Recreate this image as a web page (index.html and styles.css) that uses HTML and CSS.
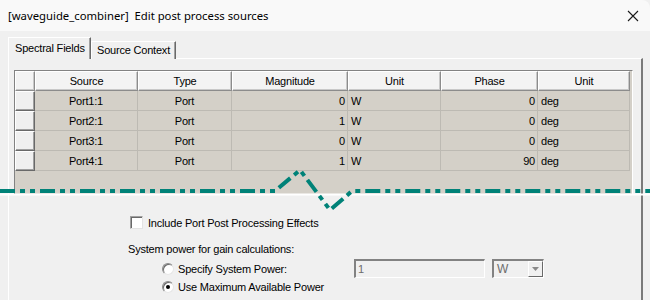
FILE: index.html
```html
<!DOCTYPE html>
<html lang="en">
<head>
    <meta charset="UTF-8">
    <meta name="viewport" content="width=device-width, initial-scale=1.0">
    <title>Edit post process sources</title>
    <link rel="stylesheet" href="styles.css">
</head>
<body>
    <div class="titlebar">
        <span class="title">[waveguide_combiner]&nbsp; Edit post process sources</span>
        <svg class="close" width="12" height="12" viewBox="0 0 12 12">
            <path d="M1 1 L11 11 M11 1 L1 11" stroke="#1a1a1a" stroke-width="1.1" fill="none"/>
        </svg>
    </div>

    <div class="dialog">
        <div class="tabs">
            <div class="tab active">Spectral Fields</div>
            <div class="tab">Source Context</div>
        </div>

        <div class="pane">
            <div class="grid">
                <div class="corner"></div>
                <div class="hdr">Source</div>
                <div class="hdr">Type</div>
                <div class="hdr">Magnitude</div>
                <div class="hdr">Unit</div>
                <div class="hdr">Phase</div>
                <div class="hdr">Unit</div>

                <div class="rowhead"></div>
                <div class="cell center">Port1:1</div>
                <div class="cell center">Port</div>
                <div class="cell num">0</div>
                <div class="cell">W</div>
                <div class="cell num">0</div>
                <div class="cell">deg</div>

                <div class="rowhead"></div>
                <div class="cell center">Port2:1</div>
                <div class="cell center">Port</div>
                <div class="cell num">1</div>
                <div class="cell">W</div>
                <div class="cell num">0</div>
                <div class="cell">deg</div>

                <div class="rowhead"></div>
                <div class="cell center">Port3:1</div>
                <div class="cell center">Port</div>
                <div class="cell num">0</div>
                <div class="cell">W</div>
                <div class="cell num">0</div>
                <div class="cell">deg</div>

                <div class="rowhead"></div>
                <div class="cell center">Port4:1</div>
                <div class="cell center">Port</div>
                <div class="cell num">1</div>
                <div class="cell">W</div>
                <div class="cell num">90</div>
                <div class="cell">deg</div>
            </div>

            <div class="options">
                <div class="check-row">
                    <span class="checkbox"></span>
                    <span>Include Port Post Processing Effects</span>
                </div>
                <div class="group-label">System power for gain calculations:</div>
                <div class="radio-row">
                    <span class="radio"></span>
                    <span class="radio-label">Specify System Power:</span>
                    <span class="textbox">1</span>
                    <span class="combo">
                        <span class="combo-value">W</span>
                        <span class="combo-btn">
                            <svg width="7" height="4" viewBox="0 0 7 4"><path d="M0 0 H7 L3.5 4 Z" fill="#8a8a8a"/></svg>
                        </span>
                    </span>
                </div>
                <div class="radio-row second">
                    <span class="radio checked"></span>
                    <span class="radio-label">Use Maximum Available Power</span>
                </div>
            </div>
        </div>
    </div>

    <!-- torn edge marking the cropped part of the dialog -->
    <svg class="break" width="650" height="300" viewBox="0 0 650 300">
        <line x1="0" y1="194.5" x2="650" y2="194.5" stroke="#ffffff" stroke-width="2"/>
        <polyline points="0,191 275,191 300,170 330,210 352,191 650,191"
                  fill="none" stroke="#008278" stroke-width="4"
                  stroke-dasharray="15 5 5 5 5 5"/>
    </svg>
</body>
</html>
```

FILE: styles.css
```css
body {
    margin: 0;
    width: 650px;
    height: 300px;
    overflow: hidden;
    position: relative;
    font-family: 'Liberation Sans', Arial, sans-serif;
    font-size: 11px;
    letter-spacing: -0.2px;
    color: #000;
    background-color: #f0f0f0;
}

.titlebar {
    height: 31px;
    display: flex;
    align-items: center;
    justify-content: space-between;
    padding: 0 11px 0 8px;
    background-color: #f9f9f9;
    border-top-right-radius: 8px;
}

.title {
    font-family: 'Noto Sans', sans-serif;
    font-size: 11.3px;
    letter-spacing: 0;
    color: #000;
}

.close {
    margin-top: 1px;
}

.dialog {
    padding: 6px 0 0 8px;
}

/* Tabs */
.tabs {
    display: flex;
    align-items: flex-end;
    height: 22px;
    position: relative;
    z-index: 1;
    margin-bottom: -1px;
}

.tab {
    box-sizing: border-box;
    height: 18px;
    white-space: nowrap;
    border-top: 1px solid #fff;
    border-left: 1px solid #fff;
    border-right: 1px solid #696969;
    box-shadow: inset -1px 0 #a0a0a0;
    background-color: #f0f0f0;
}

.tab.active {
    height: 22px;
    width: 83px;
    padding: 4px 0 0 6px;
}

.tab:not(.active) {
    width: 85px;
    padding: 2px 0 0 5px;
}

/* Tab page */
.pane {
    box-sizing: border-box;
    width: 635px;
    height: 242px;
    border-top: 1px solid #fff;
    border-left: 1px solid #fff;
    border-right: 2px solid #7a7a7a;
    padding: 11px 0 0 5px;
}

/* Data grid */
.grid {
    box-sizing: border-box;
    width: 619px;
    height: 125px;
    display: grid;
    grid-template-columns: 20px 103px 94px 116px 93px 97px 92px;
    grid-auto-rows: 20px;
    align-content: start;
    background-color: #d4d0c8;
    border-top: 1px solid #828282;
    border-left: 1px solid #828282;
    border-right: 1px solid #fff;
    border-bottom: 1px solid #fff;
}

.hdr,
.corner {
    box-sizing: border-box;
    display: flex;
    align-items: center;
    justify-content: center;
    background-color: #f3f3f3;
    border-top: 1px solid #fff;
    border-left: 1px solid #fff;
    border-right: 1px solid #8c8c8c;
    border-bottom: 1px solid #8c8c8c;
    box-shadow: inset -1px -1px #c8c8c8;
}

.rowhead {
    box-sizing: border-box;
    background-color: #f0f0f0;
    border-top: 1px solid #fff;
    border-left: 1px solid #fff;
    border-right: 1px solid #696969;
    border-bottom: 1px solid #696969;
    box-shadow: inset -1px -1px #a0a0a0;
}

.cell {
    box-sizing: border-box;
    display: flex;
    align-items: center;
    padding: 0 3px;
    border-right: 1px solid #bdbab3;
    border-bottom: 1px solid #bdbab3;
    white-space: nowrap;
}

.cell.center {
    justify-content: center;
}

.cell.num {
    justify-content: flex-end;
    padding-right: 2px;
}

/* Options below the grid */
.options {
    padding: 21px 0 0 114px;
}

.check-row {
    display: flex;
    align-items: center;
    gap: 5px;
    height: 13px;
    margin-left: 2px;
}

.checkbox {
    box-sizing: border-box;
    width: 13px;
    height: 13px;
    background-color: #fff;
    border-top: 1px solid #a0a0a0;
    border-left: 1px solid #a0a0a0;
    border-right: 1px solid #e3e3e3;
    border-bottom: 1px solid #e3e3e3;
    box-shadow: inset 1px 1px #696969;
}

.group-label {
    margin-top: 14px;
    height: 13px;
    line-height: 13px;
}

.radio-row {
    display: flex;
    align-items: center;
    height: 19px;
    margin-top: 3px;
    padding-left: 34px;
}

.radio-row.second {
    height: 14px;
    margin-top: 2px;
}

.radio {
    box-sizing: border-box;
    position: relative;
    width: 12px;
    height: 12px;
    border-radius: 50%;
    background-color: #fff;
    border: 1px solid;
    border-color: #8a8a8a #e6e6e6 #e6e6e6 #8a8a8a;
    box-shadow: inset 1px 1px #6a6a6a;
}

.radio.checked::after {
    content: '';
    position: absolute;
    left: 3px;
    top: 3px;
    width: 4px;
    height: 4px;
    border-radius: 50%;
    background-color: #000;
}

.radio-label {
    margin-left: 4px;
    width: 176px;
    white-space: nowrap;
}

.textbox,
.combo {
    box-sizing: border-box;
    height: 19px;
    display: flex;
    align-items: center;
    background-color: #f0f0f0;
    color: #6d6d6d;
    border-top: 2px solid #828282;
    border-left: 2px solid #828282;
    border-right: 1px solid #fff;
    border-bottom: 1px solid #fff;
}

.textbox {
    width: 131px;
    padding-left: 2px;
}

.combo {
    width: 52px;
    margin-left: 7px;
    justify-content: space-between;
}

.combo-value {
    padding-left: 3px;
    font-size: 12px;
}

.combo-btn {
    box-sizing: border-box;
    width: 15px;
    height: 16px;
    display: flex;
    align-items: center;
    justify-content: center;
    background-color: #f0f0f0;
    border-top: 1px solid #fff;
    border-left: 1px solid #fff;
    border-right: 1px solid #696969;
    border-bottom: 1px solid #696969;
}

.break {
    position: absolute;
    top: 0;
    left: 0;
    pointer-events: none;
}
```
